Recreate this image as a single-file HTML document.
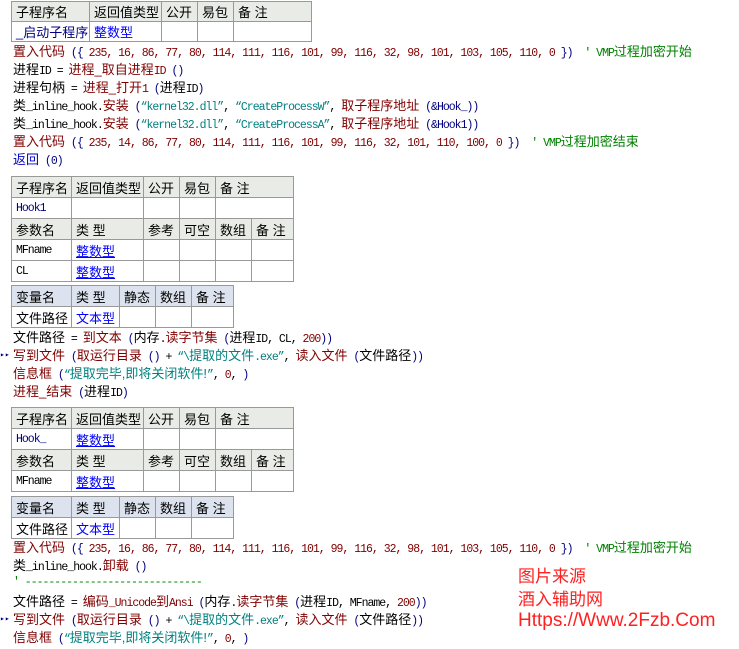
<!DOCTYPE html>
<html><head><meta charset="utf-8"><style>
body{margin:0;width:739px;height:649px;background:#fff;position:relative;overflow:hidden;font-family:"Liberation Mono","Noto Sans CJK SC",monospace;font-size:11.5px;letter-spacing:-1px;color:#000}
.l{position:absolute;left:13px;white-space:pre;height:18px;line-height:18px}
.c{font-family:"Liberation Sans","Noto Sans CJK SC",sans-serif;font-size:13px;letter-spacing:0}
.r{color:#800000}.n{color:#000080}.s{color:#008080}.g{color:#008000}.b{color:#0000ff}
table{position:absolute;border-collapse:collapse;left:11px;font-family:"Liberation Sans","Noto Sans CJK SC",sans-serif;font-size:13px;letter-spacing:0}
td{border:1px solid #999;height:20px;padding:0 0 0 4px;white-space:nowrap;overflow:hidden}
.t1 td{height:18px}
.h td{background:#e9ece6}
.v td{background:#dce3ee}
.m{font-family:"Liberation Mono",monospace;font-size:11.5px;letter-spacing:-1px;color:#000080}
.mk{font-family:"Liberation Mono",monospace;font-size:11.5px;letter-spacing:-1px}
.arr{position:absolute;left:0;font-size:8px;color:#000080;line-height:18px;letter-spacing:0}
.wm{position:absolute;left:518px;color:#ff2020;font-family:"Noto Sans CJK SC",sans-serif;font-size:17px;line-height:24px;letter-spacing:0}
</style></head><body>

<table class="t1" style="top:1px;width:301px">
<tr class="h"><td style="width:73px">子程序名</td><td style="width:67px">返回值类型</td><td style="width:31px">公开</td><td style="width:31px">易包</td><td>备 注</td></tr>
<tr><td class="n">_启动子程序</td><td class="b">整数型</td><td></td><td></td><td></td></tr>
</table>

<div class="l" style="top:43px"><span class="c r">置入代码</span> <span class="n">({</span> <span class="r">235, 16, 86, 77, 80, 114, 111, 116, 101, 99, 116, 32, 98, 101, 103, 105, 110, 0</span> <span class="n">})</span>  <span class="g">' VMP<span class="c">过程加密开始</span></span></div>
<div class="l" style="top:61px"><span class="c">进程</span>ID = <span class="c r">进程_取自进程</span><span class="r">ID</span> <span class="n">()</span></div>
<div class="l" style="top:79px"><span class="c">进程句柄</span> = <span class="c r">进程_打开</span><span class="r">1</span> <span class="n">(</span><span class="c">进程</span>ID<span class="n">)</span></div>
<div class="l" style="top:97px"><span class="c">类</span>_inline_hook.<span class="c r">安装</span> <span class="n">(</span><span class="s">“kernel32.dll”</span>, <span class="s">“CreateProcessW”</span>, <span class="c r">取子程序地址</span> <span class="n">(&amp;Hook_))</span></div>
<div class="l" style="top:115px"><span class="c">类</span>_inline_hook.<span class="c r">安装</span> <span class="n">(</span><span class="s">“kernel32.dll”</span>, <span class="s">“CreateProcessA”</span>, <span class="c r">取子程序地址</span> <span class="n">(&amp;Hook1))</span></div>
<div class="l" style="top:133px"><span class="c r">置入代码</span> <span class="n">({</span> <span class="r">235, 14, 86, 77, 80, 114, 111, 116, 101, 99, 116, 32, 101, 110, 100, 0</span> <span class="n">})</span>  <span class="g">' VMP<span class="c">过程加密结束</span></span></div>
<div class="l" style="top:151px"><span class="c n" style="color:#0000c0">返回</span> <span class="n">(0)</span></div>

<table style="top:176px;width:283px">
<tr class="h"><td style="width:55px">子程序名</td><td style="width:67px">返回值类型</td><td style="width:31px">公开</td><td style="width:31px">易包</td><td colspan="2">备 注</td></tr>
<tr><td class="m">Hook1</td><td></td><td></td><td></td><td colspan="2"></td></tr>
<tr class="h"><td>参数名</td><td>类 型</td><td>参考</td><td>可空</td><td style="width:31px">数组</td><td>备 注</td></tr>
<tr><td class="mk">MFname</td><td class="b" style="text-decoration:underline">整数型</td><td></td><td></td><td></td><td></td></tr>
<tr><td class="mk">CL</td><td class="b" style="text-decoration:underline">整数型</td><td></td><td></td><td></td><td></td></tr>
</table>

<table style="top:285px;width:223px">
<tr class="v"><td style="width:55px">变量名</td><td style="width:43px">类 型</td><td style="width:31px">静态</td><td style="width:31px">数组</td><td>备 注</td></tr>
<tr><td>文件路径</td><td class="b">文本型</td><td></td><td></td><td></td></tr>
</table>

<div class="l" style="top:329px"><span class="c">文件路径</span> = <span class="c r">到文本</span> <span class="n">(</span><span class="c">内存</span>.<span class="c r">读字节集</span> <span class="n">(</span><span class="c">进程</span>ID, CL, <span class="r">200</span><span class="n">))</span></div>
<div class="arr" style="top:347px">▸▸</div>
<div class="l" style="top:347px"><span class="c r">写到文件</span> <span class="n">(</span><span class="c r">取运行目录</span> <span class="n">()</span> + <span class="s">“\<span class="c">提取的文件</span>.exe”</span>, <span class="c r">读入文件</span> <span class="n">(</span><span class="c">文件路径</span><span class="n">))</span></div>
<div class="l" style="top:365px"><span class="c r">信息框</span> <span class="n">(</span><span class="s">“<span class="c">提取完毕,即将关闭软件!</span>”</span>, <span class="r">0</span>, <span class="n">)</span></div>
<div class="l" style="top:383px"><span class="c r">进程_结束</span> <span class="n">(</span><span class="c">进程</span>ID<span class="n">)</span></div>

<table style="top:407px;width:283px">
<tr class="h"><td style="width:55px">子程序名</td><td style="width:67px">返回值类型</td><td style="width:31px">公开</td><td style="width:31px">易包</td><td colspan="2">备 注</td></tr>
<tr><td class="m">Hook_</td><td class="b" style="text-decoration:underline">整数型</td><td></td><td></td><td colspan="2"></td></tr>
<tr class="h"><td>参数名</td><td>类 型</td><td>参考</td><td>可空</td><td style="width:31px">数组</td><td>备 注</td></tr>
<tr><td class="mk">MFname</td><td class="b" style="text-decoration:underline">整数型</td><td></td><td></td><td></td><td></td></tr>
</table>

<table style="top:496px;width:223px">
<tr class="v"><td style="width:55px">变量名</td><td style="width:43px">类 型</td><td style="width:31px">静态</td><td style="width:31px">数组</td><td>备 注</td></tr>
<tr><td>文件路径</td><td class="b">文本型</td><td></td><td></td><td></td></tr>
</table>

<div class="l" style="top:539px"><span class="c r">置入代码</span> <span class="n">({</span> <span class="r">235, 16, 86, 77, 80, 114, 111, 116, 101, 99, 116, 32, 98, 101, 103, 105, 110, 0</span> <span class="n">})</span>  <span class="g">' VMP<span class="c">过程加密开始</span></span></div>
<div class="l" style="top:557px"><span class="c">类</span>_inline_hook.<span class="c r">卸载</span> <span class="n">()</span></div>
<div class="l g" style="top:574px">' ------------------------------</div>
<div class="l" style="top:593px"><span class="c">文件路径</span> = <span class="c r">编码</span><span class="r">_Unicode</span><span class="c r">到</span><span class="r">Ansi</span> <span class="n">(</span><span class="c">内存</span>.<span class="c r">读字节集</span> <span class="n">(</span><span class="c">进程</span>ID, MFname, <span class="r">200</span><span class="n">))</span></div>
<div class="arr" style="top:611px">▸▸</div>
<div class="l" style="top:611px"><span class="c r">写到文件</span> <span class="n">(</span><span class="c r">取运行目录</span> <span class="n">()</span> + <span class="s">“\<span class="c">提取的文件</span>.exe”</span>, <span class="c r">读入文件</span> <span class="n">(</span><span class="c">文件路径</span><span class="n">))</span></div>
<div class="l" style="top:629px"><span class="c r">信息框</span> <span class="n">(</span><span class="s">“<span class="c">提取完毕,即将关闭软件!</span>”</span>, <span class="r">0</span>, <span class="n">)</span></div>

<div class="wm" style="top:563px">图片来源</div>
<div class="wm" style="top:586px">酒入辅助网</div>
<div class="wm" style="top:609px;font-family:'Liberation Sans',sans-serif;font-size:19px">Https://Www.2Fzb.Com</div>
</body></html>
